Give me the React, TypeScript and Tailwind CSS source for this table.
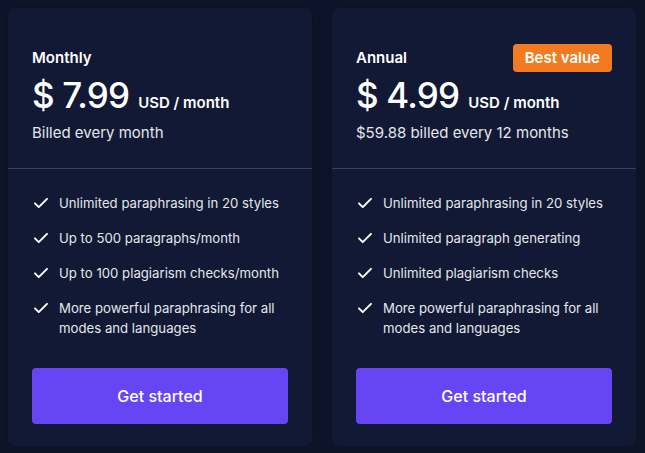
import React from "react";

const Check = () => (
  <svg width="18" height="18" viewBox="0 0 24 24" fill="none" stroke="white" strokeWidth="2.6" strokeLinecap="round" strokeLinejoin="round" className="shrink-0 mt-[1px]">
    <path d="M4 12.5l5 5L20 6.5" />
  </svg>
);

type Plan = {
  name: string;
  price: string;
  billed: string;
  features: string[];
  badge?: boolean;
};

const plans: Plan[] = [
  {
    name: "Monthly",
    price: "$ 7.99",
    billed: "Billed every month",
    features: [
      "Unlimited paraphrasing in 20 styles",
      "Up to 500 paragraphs/month",
      "Up to 100 plagiarism checks/month",
      "More powerful paraphrasing for all modes and languages",
    ],
  },
  {
    name: "Annual",
    price: "$ 4.99",
    billed: "$59.88 billed every 12 months",
    badge: true,
    features: [
      "Unlimited paraphrasing in 20 styles",
      "Unlimited paragraph generating",
      "Unlimited plagiarism checks",
      "More powerful paraphrasing for all modes and languages",
    ],
  },
];

function Card({ plan }: { plan: Plan }) {
  return (
    <div className="w-[304px] h-[438px] rounded-lg bg-[#111935] shadow-[0_0_14px_rgba(0,0,0,0.25)] flex flex-col">
      <div className="px-6 pt-9 pb-[23px] shrink-0">
        <div className="flex items-center justify-between h-[28px]">
          <span className="text-[15px] font-semibold text-white">{plan.name}</span>
          {plan.badge && (
            <span className="bg-[#f27b21] text-white text-[15px] font-semibold rounded px-3 h-[28px] flex items-center">
              Best value
            </span>
          )}
        </div>
        <div className="flex items-baseline mt-[3px]">
          <span className="text-[35px] leading-[40px] font-medium text-white tracking-[-0.8px]">{plan.price}</span>
          <span className="text-[15px] font-semibold text-white ml-[9px]">USD / month</span>
        </div>
        <div className="text-[15px] text-[#e5e7eb] mt-[7px]">{plan.billed}</div>
      </div>
      <div className="h-px bg-[#3b4358] shrink-0" />
      <div className="px-6 pt-[24px] shrink-0">
        <ul className="flex flex-col gap-[15px]">
          {plan.features.map((f) => (
            <li key={f} className="flex gap-[9px] text-[13.2px] leading-[20px] text-[#e5e7eb]">
              <Check />
              <span>{f}</span>
            </li>
          ))}
        </ul>
        <button className="mt-[30px] w-full h-[56px] rounded bg-[#6645f5] text-white text-[16px] font-medium">
          Get started
        </button>
      </div>
    </div>
  );
}

export default function App() {
  return (
    <div className="w-[645px] h-[453px] bg-[#0e152b] overflow-hidden flex items-start gap-5 px-2 pt-2" style={{ fontFamily: "Inter, sans-serif" }}>
      {plans.map((p) => (
        <Card key={p.name} plan={p} />
      ))}
    </div>
  );
}
